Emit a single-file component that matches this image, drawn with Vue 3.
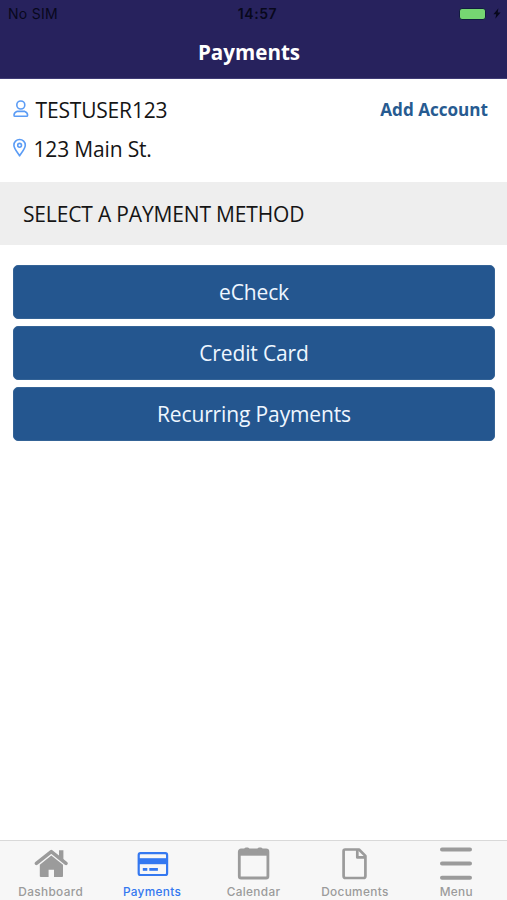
<script setup>
const methods = ['eCheck', 'Credit Card', 'Recurring Payments']
const tabs = ['Dashboard', 'Payments', 'Calendar', 'Documents', 'Menu']
</script>

<template>
  <div class="screen">
    <header class="header">
      <div class="status">
        <span class="carrier">No SIM</span>
        <span class="clock">14:57</span>
        <span class="power">
          <span class="battery"></span>
          <svg class="bolt" width="8" height="11" viewBox="0 0 8 11"><path d="M5.4 0.3 0.4 6.2H3.2L2.3 10.8 7.6 4.5H4.7Z" fill="#08081c" /></svg>
        </span>
      </div>
      <h1 class="title">Payments</h1>
    </header>

    <section class="account">
      <div class="row">
        <svg class="user-icon" width="16" height="18" viewBox="0 0 16 18" fill="none" stroke="#5b9cf5" stroke-width="1.6">
          <circle cx="7.8" cy="5" r="4" />
          <path d="M3.8 11.4H11.8C13.6 12 14.6 13.6 14.6 15.2C14.6 16 14.2 16.3 13.6 16.3H2C1.4 16.3 1 16 1 15.2C1 13.6 2.1 12 3.8 11.4Z" stroke-linejoin="round" />
        </svg>
        <span class="name">TESTUSER123</span>
        <a class="add">Add Account</a>
      </div>
      <div class="row">
        <svg class="pin-icon" width="14" height="19" viewBox="0 0 14 19" fill="none" stroke="#5b9cf5" stroke-width="1.6">
          <path d="M6.6 17.8C5.1 15.2 0.9 10.6 0.9 7.2A5.7 5.7 0 0 1 12.3 7.2C12.3 10.6 8.1 15.2 6.6 17.8Z" stroke-linejoin="round" />
          <circle cx="6.6" cy="7.3" r="1.9" />
        </svg>
        <span class="address">123 Main St.</span>
      </div>
    </section>

    <h2 class="section-title"><span>SELECT A PAYMENT METHOD</span></h2>

    <main class="methods">
      <button v-for="m in methods" :key="m" class="method">{{ m }}</button>
    </main>

    <nav class="tabs">
      <div v-for="(t, i) in tabs" :key="t" class="tab" :class="{ active: i === 1 }">
        <svg class="tab-icon" width="34" height="34" viewBox="0 0 34 34">
          <g v-if="i === 0" fill="currentColor">
            <path d="M2.4 17.4 17.3 5.6 32 17.4" fill="none" stroke="currentColor" stroke-width="3.5" stroke-linecap="round" stroke-linejoin="round" />
            <path d="M25 4.3H29.4V15L25 11.5Z" />
            <path d="M17.3 9.4 29 18.7V30.2Q29 31 28 31H20V23.7H14.6V31H7Q5.8 31 5.8 30.2V18.7Z" />
          </g>
          <g v-else-if="i === 1" fill="currentColor">
            <rect x="3.7" y="7.2" width="28.4" height="21.8" rx="1.8" fill="none" stroke="currentColor" stroke-width="2.2" />
            <rect x="3.7" y="12.2" width="28.4" height="6" />
            <rect x="7.8" y="22" width="4.5" height="2.8" />
            <rect x="14.3" y="22" width="8.6" height="2.8" />
          </g>
          <g v-else-if="i === 2" fill="currentColor">
            <rect x="3.3" y="4" width="28.6" height="28" rx="1.8" fill="none" stroke="currentColor" stroke-width="2.8" />
            <path d="M3 4H32V9.7H3Z" />
            <rect x="8.3" y="1.4" width="5" height="4" rx="1.5" />
            <rect x="21.5" y="1.4" width="5" height="4" rx="1.5" />
          </g>
          <g v-else-if="i === 3" fill="none" stroke="currentColor" stroke-width="2.7" stroke-linejoin="round">
            <path d="M7.1 3.5H21L27.4 9.9V30Q27.4 32 25.4 32H7.6Q5.6 32 5.6 30V5Q5.6 3.5 7.1 3.5Z" />
            <path d="M19.3 4V11.4H27" />
          </g>
          <g v-else stroke="currentColor" stroke-width="4" stroke-linecap="round">
            <path d="M3 3.5H31M3 17.6H31M3 31.7H31" />
          </g>
        </svg>
        <span class="tab-label">{{ t }}</span>
      </div>
    </nav>
  </div>
</template>

<style>
body {
  margin: 0;
}
</style>

<style scoped>
.screen {
  height: 900px;
  display: flex;
  flex-direction: column;
  background: #fff;
  color: #151515;
  font-family: "Open Sans", sans-serif;
}
.header {
  height: 79px;
  box-sizing: border-box;
  background: #27225d;
  border-bottom: 1px solid #403c75;
}
.status {
  height: 27px;
  padding: 0 6px 0 8px;
  display: grid;
  grid-template-columns: 1fr auto 1fr;
  align-items: center;
  font-family: Inter, sans-serif;
  color: #08081c;
}
.carrier {
  font-size: 14px;
  letter-spacing: 0.3px;
}
.clock {
  padding-left: 6px;
  font-size: 14px;
  font-weight: 600;
  letter-spacing: 0.6px;
}
.power {
  display: flex;
  justify-content: flex-end;
  align-items: center;
  gap: 7px;
}
.battery {
  width: 25px;
  height: 10px;
  border: 1px solid #121c40;
  border-radius: 3px;
  background: #76d672;
}
.title {
  margin: 0;
  padding-right: 9px;
  line-height: 50px;
  text-align: center;
  font-size: 20.6px;
  font-weight: 700;
  color: #fff;
}
.account {
  height: 103px;
  box-sizing: border-box;
  padding: 11px 19px 0 13px;
}
.row {
  height: 39px;
  display: flex;
  align-items: center;
}
.user-icon {
  margin-right: 6.5px;
  margin-top: -2px;
}
.pin-icon {
  margin-right: 6.5px;
  margin-top: -2px;
}
.name,
.address {
  font-size: 21px;
  letter-spacing: -0.17px;
}
.add {
  margin-left: auto;
  font-size: 17.1px;
  font-weight: 700;
  color: #275b91;
}
.section-title {
  margin: 0;
  height: 63px;
  padding-left: 23px;
  display: flex;
  align-items: center;
  background: #eee;
  font-size: 21px;
  font-weight: 400;
  letter-spacing: -0.16px;
}
.methods {
  flex: 1;
  padding: 20px 12px 0 13px;
  display: flex;
  flex-direction: column;
  gap: 7px;
}
.method {
  height: 54px;
  padding: 0;
  border: 1px solid #346396;
  border-radius: 5px;
  background: #24568f;
  color: #eef6ff;
  font: 21px "Open Sans", sans-serif;
  letter-spacing: -0.13px;
}
.tabs {
  height: 60px;
  box-sizing: border-box;
  border-top: 1px solid #d9d9d9;
  display: grid;
  grid-template-columns: repeat(5, 1fr);
  background: #f7f7f7;
}
.tab {
  padding-top: 5px;
  display: flex;
  flex-direction: column;
  align-items: center;
  color: #9b9b9b;
}
.active {
  color: #3478f0;
}
.tab-icon {
  display: block;
}
.tab-label {
  margin-top: 4px;
  line-height: 16px;
  font-family: Inter, sans-serif;
  font-size: 11.8px;
  font-weight: 500;
  letter-spacing: 0.35px;
}
</style>
